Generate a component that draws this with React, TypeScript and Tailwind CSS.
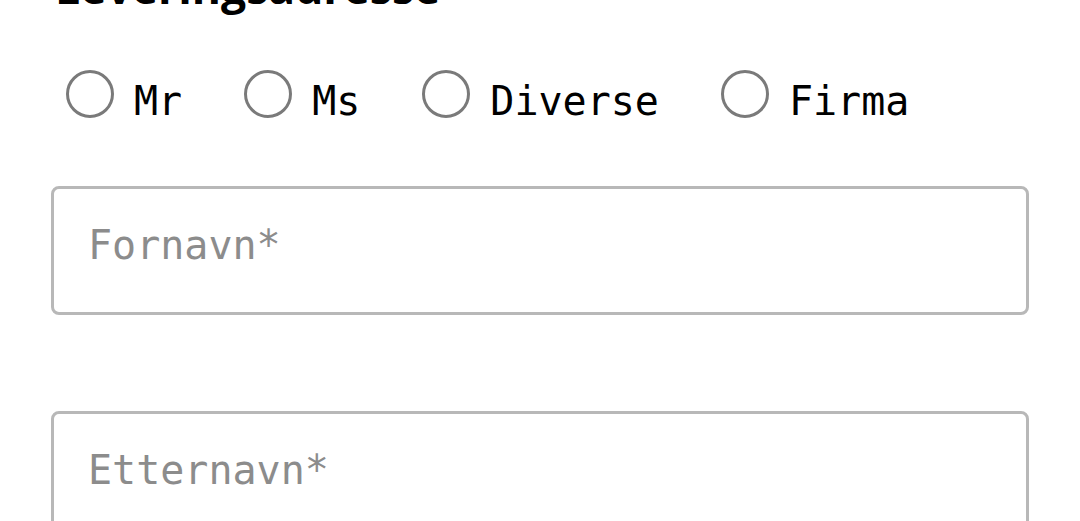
const titles = ['Mr', 'Ms', 'Diverse', 'Firma'];

function Radio({ label }: { label: string }) {
  return (
    <label className="flex items-center mr-[62px]">
      <span className="w-[48px] h-[48px] rounded-full border-[3px] border-[#7a7a7a] bg-white shrink-0" />
      <span className="ml-[20px] mt-[14px] text-[40px] leading-[48px] text-black font-['DejaVu_Sans_Mono',monospace]">
        {label}
      </span>
    </label>
  );
}

function Field({ placeholder }: { placeholder: string }) {
  return (
    <div className="h-[129px] rounded-[8px] border-[3px] border-[#b8b8b8] bg-white flex items-center px-[34px]">
      <span className="text-[40px] leading-[48px] -mt-[12px] text-[#8c8c8c] font-['DejaVu_Sans_Mono',monospace]">
        {placeholder}
      </span>
    </div>
  );
}

export default function App() {
  return (
    <div className="w-[1080px] h-[521px] overflow-hidden bg-white px-[51px]">
      <h2 className="-mt-[42px] ml-[4px] text-[44.5px] leading-[58px] font-bold text-black font-['Open_Sans',sans-serif]">
        Leveringsadresse
      </h2>
      <div className="flex items-center pl-[15px] mt-[47px]">
        {titles.map((t) => (
          <Radio key={t} label={t} />
        ))}
      </div>
      <div className="mt-[61px] flex flex-col gap-[96px]">
        <Field placeholder="Fornavn*" />
        <Field placeholder="Etternavn*" />
      </div>
    </div>
  );
}
